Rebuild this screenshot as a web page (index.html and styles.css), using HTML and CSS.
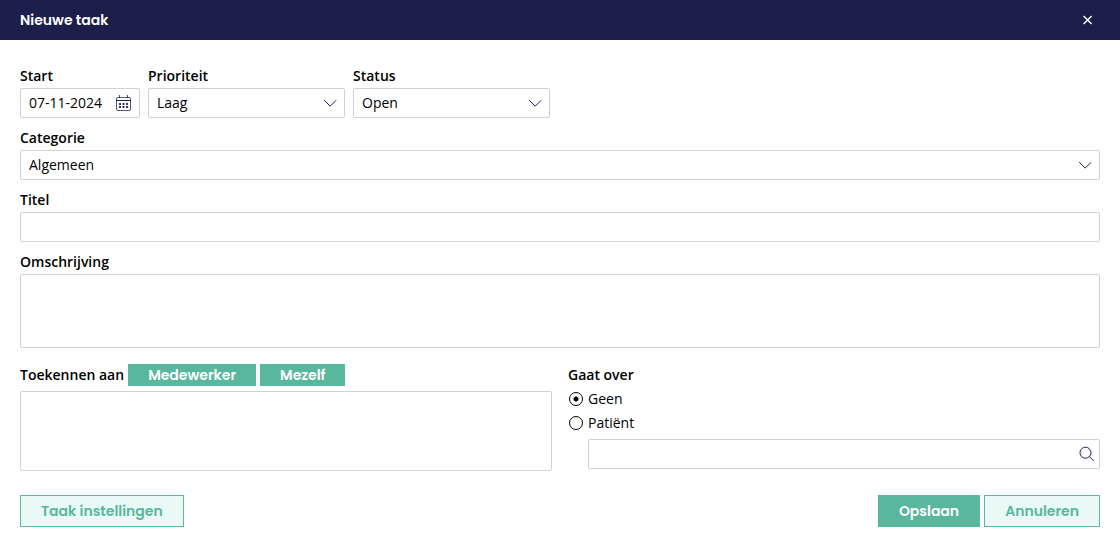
FILE: index.html
```html
<!DOCTYPE html>
<html lang="nl">
<head>
<meta charset="utf-8">
<meta name="viewport" content="width=device-width, initial-scale=1">
<title>Nieuwe taak</title>
<link rel="stylesheet" href="styles.css">
</head>
<body>
<header class="titlebar">
  <h1 class="titlebar-title">Nieuwe taak</h1>
  <button class="close" type="button" aria-label="Sluiten">
    <svg width="10" height="10" viewBox="0 0 10 10" aria-hidden="true"><path d="M.6 1l8 8M8.600 1l-8 8" fill="none" stroke="currentColor" stroke-width="1.4"/></svg>
  </button>
</header>
<form class="form">
  <div class="top-row">
    <div class="field field-date">
      <label class="label" for="start">Start</label>
      <div class="control">
        <input class="input input-date" id="start" type="text" value="07-11-2024">
        <svg class="icon" width="16" height="16" viewBox="0 0 16 16" aria-hidden="true">
          <g fill="none" stroke="currentColor"><rect x=".5" y="2.500" width="14" height="13" rx="1.5" stroke-opacity=".75"/><path d="M3.500 0v3M11.500 0v3" stroke-opacity=".75"/><path d="M0 5.500h15"/></g>
          <path fill="currentColor" fill-opacity=".9" d="M3 8h2v2H3zM6.500 8h2v2h-2zM10 8h2v2h-2zM3 11h2v2H3zM6.500 11h2v2h-2zM10 11h2v2h-2z"/>
        </svg>
      </div>
    </div>
    <div class="field field-choice">
      <label class="label" for="prioriteit">Prioriteit</label>
      <div class="control">
        <select class="input" id="prioriteit"><option>Laag</option></select>
        <svg class="icon" width="14" height="8" viewBox="0 0 14 8" aria-hidden="true"><path d="M1.200 1.200l6 6 6-6" fill="none" stroke="currentColor"/></svg>
      </div>
    </div>
    <div class="field field-choice">
      <label class="label" for="status">Status</label>
      <div class="control">
        <select class="input" id="status"><option>Open</option></select>
        <svg class="icon" width="14" height="8" viewBox="0 0 14 8" aria-hidden="true"><path d="M1.200 1.200l6 6 6-6" fill="none" stroke="currentColor"/></svg>
      </div>
    </div>
  </div>
  <div class="field">
    <label class="label" for="categorie">Categorie</label>
    <div class="control">
      <select class="input" id="categorie"><option>Algemeen</option></select>
      <svg class="icon" width="14" height="8" viewBox="0 0 14 8" aria-hidden="true"><path d="M1.200 1.200l6 6 6-6" fill="none" stroke="currentColor"/></svg>
    </div>
  </div>
  <div class="field">
    <label class="label" for="titel">Titel</label>
    <input class="input" id="titel" type="text">
  </div>
  <div class="field">
    <label class="label" for="omschrijving">Omschrijving</label>
    <textarea class="input textarea" id="omschrijving"></textarea>
  </div>
  <div class="columns">
    <div class="assign">
      <div class="assign-head">
        <label class="label" for="toekennen">Toekennen aan</label>
        <div class="assign-actions">
          <button class="button button-small" type="button">Medewerker</button>
          <button class="button button-small" type="button">Mezelf</button>
        </div>
      </div>
      <textarea class="input assign-box" id="toekennen" readonly></textarea>
    </div>
    <fieldset class="about">
      <legend class="label about-title">Gaat over</legend>
      <label class="choice"><input class="radio" type="radio" name="over" checked>Geen</label>
      <label class="choice"><input class="radio" type="radio" name="over">Patiënt</label>
      <div class="control search">
        <input class="input" type="text" aria-label="Zoek patiënt">
        <svg class="icon icon-search" width="16" height="16" viewBox="0 0 16 16" aria-hidden="true"><g fill="none" stroke="currentColor"><circle cx="6.500" cy="6.700" r="5.500"/><path d="M10.500 10.700l4.200 4.200"/></g></svg>
      </div>
    </fieldset>
  </div>
  <footer class="footer">
    <button class="button button-outline" type="button">Taak instellingen</button>
    <div class="footer-actions">
      <button class="button" type="submit">Opslaan</button>
      <button class="button button-outline" type="button">Annuleren</button>
    </div>
  </footer>
</form>
</body>
</html>
```
FILE: styles.css
```css
* { box-sizing: border-box; }

body {
  margin: 0;
  background: #fff;
  color: #000;
  font: 14px/20px "Open Sans", "Noto Sans", sans-serif;
}

.titlebar {
  display: flex;
  align-items: center;
  justify-content: space-between;
  height: 40px;
  padding: 0 20px;
  background: #1e1e4b;
  color: #fff;
}

.titlebar-title {
  margin: 0;
  font: 600 14px/20px Poppins, Inter, sans-serif;
}

.close {
  display: flex;
  align-items: center;
  justify-content: center;
  width: 24px;
  height: 24px;
  padding: 0;
  border: 0;
  background: none;
  color: #fff;
}

.form {
  display: flex;
  flex-direction: column;
  gap: 10px;
  padding: 26px 20px 8px;
}

.top-row {
  display: flex;
  gap: 8px;
}

.field {
  display: flex;
  flex-direction: column;
  gap: 2px;
}

.field-date { width: 120px; }
.field-choice { width: 197px; }

.label { font-weight: 600; }

.control { position: relative; }

.input {
  display: block;
  width: 100%;
  height: 30px;
  margin: 0;
  padding: 0 8px;
  border: 1px solid #d0d0da;
  border-radius: 2px;
  background: #fff;
  color: #000;
  font: inherit;
  appearance: none;
  resize: none;
}

.input-date { padding-bottom: 2px; }

.textarea { height: 74px; }

.icon {
  position: absolute;
  top: 0;
  right: 8px;
  bottom: 0;
  margin: auto 0;
  color: #1e1e4b;
  pointer-events: none;
}

.icon-search { right: 5px; }

.columns {
  display: grid;
  grid-template-columns: 1fr 1fr;
  gap: 16px;
  padding-top: 6px;
}

.assign-head {
  display: flex;
  align-items: center;
  gap: 4px;
  margin-bottom: 5px;
}

.assign-actions {
  display: flex;
  gap: 4px;
}

.assign-box { height: 80px; }

.about {
  min-width: 0;
  margin: 0;
  padding: 0;
  border: 0;
}

.about-title {
  margin-bottom: 1px;
  padding: 0;
  line-height: 22px;
}

.choice {
  display: flex;
  align-items: center;
  gap: 5px;
  height: 24px;
}

.radio {
  width: 14px;
  height: 14px;
  margin: 0 0 0 1px;
  border: 1px solid #000;
  border-radius: 50%;
  appearance: none;
}

.radio:checked {
  background: radial-gradient(circle, #000 2px, transparent 3px);
}

.search { margin: 4px 0 0 20px; }

.button {
  height: 32px;
  padding: 0 20px;
  border: 1px solid #58b79d;
  background: #58b79d;
  color: #fff;
  font: 600 14px/20px Poppins, Inter, sans-serif;
  white-space: nowrap;
}

.button-small {
  height: 22px;
  padding: 0 19px;
}

.button-outline {
  background: #e9f9f6;
  color: #58b79d;
}

.footer {
  display: flex;
  justify-content: space-between;
  padding-top: 14px;
}

.footer-actions {
  display: flex;
  gap: 4px;
}
```
